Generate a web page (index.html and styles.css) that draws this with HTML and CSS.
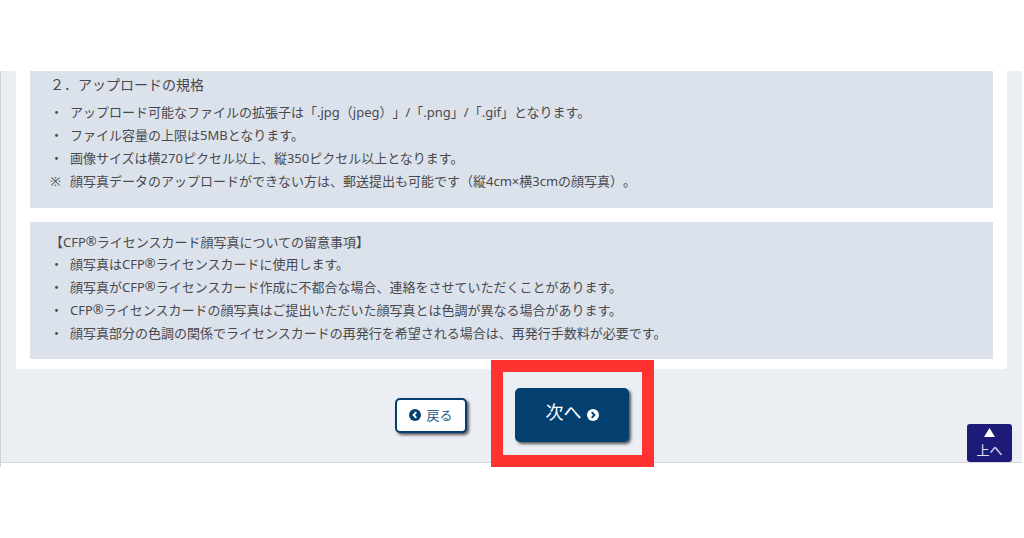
FILE: index.html
```html
<!DOCTYPE html>
<html lang="ja">
<head>
<meta charset="utf-8">
<meta name="viewport" content="width=device-width, initial-scale=1">
<title>アップロードの規格</title>
<link rel="stylesheet" href="styles.css">
</head>
<body>
<div class="frame">
  <main class="page">
    <div class="sheet">
      <section class="panel panel-spec">
        <h2 class="spec-title">２．アップロードの規格</h2>
        <ul class="notes">
          <li><span class="mark">・</span><span>アップロード可能なファイルの拡張子は「.jpg（jpeg）」/「.png」/「.gif」となります。</span></li>
          <li><span class="mark">・</span><span>ファイル容量の上限は5MBとなります。</span></li>
          <li><span class="mark">・</span><span>画像サイズは横270ピクセル以上、縦350ピクセル以上となります。</span></li>
          <li><span class="mark">※</span><span>顔写真データのアップロードができない方は、郵送提出も可能です（縦4cm×横3cmの顔写真）。</span></li>
        </ul>
      </section>
      <section class="panel panel-card">
        <h2 class="card-title">【CFP<sup>®</sup>ライセンスカード顔写真についての留意事項】</h2>
        <ul class="notes">
          <li><span class="mark">・</span><span>顔写真はCFP<sup>®</sup>ライセンスカードに使用します。</span></li>
          <li><span class="mark">・</span><span>顔写真がCFP<sup>®</sup>ライセンスカード作成に不都合な場合、連絡をさせていただくことがあります。</span></li>
          <li><span class="mark">・</span><span>CFP<sup>®</sup>ライセンスカードの顔写真はご提出いただいた顔写真とは色調が異なる場合があります。</span></li>
          <li><span class="mark">・</span><span>顔写真部分の色調の関係でライセンスカードの再発行を希望される場合は、再発行手数料が必要です。</span></li>
        </ul>
      </section>
    </div>
    <div class="actions">
      <button type="button" class="btn btn-back">
        <svg class="icon" viewBox="0 0 12 12" aria-hidden="true"><circle cx="6" cy="6" r="6" fill="#04406f"/><path d="M7.3 3.2 4.6 6l2.7 2.8" fill="none" stroke="#fff" stroke-width="1.9"/></svg>
        <span>戻る</span>
      </button>
      <div class="highlight">
        <button type="button" class="btn btn-next">
          <span>次へ</span>
          <svg class="icon" viewBox="0 0 12 12" aria-hidden="true"><circle cx="6" cy="6" r="6" fill="#fff"/><path d="M4.7 3.2 7.4 6 4.7 8.8" fill="none" stroke="#04406f" stroke-width="1.9"/></svg>
        </button>
      </div>
    </div>
    <a class="to-top" href="#">
      <svg class="triangle" viewBox="0 0 11 9" aria-hidden="true"><path d="M5.500 0 11 9H0z" fill="#fff"/></svg>
      <span>上へ</span>
    </a>
  </main>
</div>
</body>
</html>
```
FILE: styles.css
```css
* {
  box-sizing: border-box;
}

body {
  margin: 0;
  background: #fff;
  color: #48494d;
  font-family: "Noto Sans", "Noto Sans CJK JP", sans-serif;
  font-size: 13px;
  line-height: 23px;
  text-spacing-trim: space-all;
}

.frame {
  margin: 71px 2px 0 0;
  padding-bottom: 4px;
  border-left: 1px solid #cfd1d4;
}

.page {
  position: relative;
  background: #ebeef3;
  border-bottom: 1px solid #d9d5da;
}

.sheet {
  display: flex;
  flex-direction: column;
  gap: 14px;
  margin: 0 15px;
  padding: 0 14px 10px;
  background: #fff;
  border-radius: 0 0 3px 3px;
}

.panel {
  background: #dce2ec;
}

.panel-spec {
  padding: 2px 20px 15px;
}

.panel-card {
  padding: 10px 20px 14px;
}

.spec-title,
.card-title {
  margin: 0;
  font-weight: 400;
}

.spec-title {
  margin-bottom: 5px;
  font-size: 14px;
}

.card-title {
  font-size: 13px;
  line-height: 21px;
}

.notes {
  margin: 0;
  padding: 0;
  list-style: none;
}

.notes li {
  display: flex;
  gap: 7px;
}

.mark {
  flex: none;
  width: 13px;
}

sup {
  font-size: 13px;
  line-height: 0;
  vertical-align: 1px;
}

.actions {
  display: flex;
  justify-content: center;
  align-items: center;
  gap: 24px;
  margin: -9px 0 -5px;
  padding-left: 26px;
}

.btn {
  display: flex;
  justify-content: center;
  align-items: center;
  font-family: inherit;
  border-radius: 5px;
  cursor: pointer;
}

.icon {
  width: 12px;
  height: 12px;
}

.btn-back {
  gap: 5px;
  width: 72px;
  height: 35px;
  margin-top: 4px;
  padding: 0 0 2px;
  background: #fff;
  border: 2px solid #04406f;
  box-shadow: 2px 2px 3px #555;
  color: #2b5d85;
  font-size: 13px;
}

.highlight {
  position: relative;
  padding: 16px 13px 13px 12px;
  border: 12px solid #ff3131;
}

.btn-next {
  gap: 5px;
  width: 114px;
  height: 54px;
  padding: 0 0 8px;
  background: #04406f;
  border: 0;
  box-shadow: 2px 2px 3px #555;
  color: #fff;
  font-size: 18px;
}

.btn-next .icon {
  margin-top: 7px;
}

.to-top {
  position: absolute;
  right: 10px;
  bottom: 0;
  display: flex;
  flex-direction: column;
  align-items: center;
  gap: 2px;
  width: 45px;
  padding-top: 4px;
  background: #1e1b78;
  border-radius: 3px;
  color: #e4e4f2;
  font-size: 13px;
  text-decoration: none;
}

.triangle {
  width: 11px;
  height: 9px;
}
```
